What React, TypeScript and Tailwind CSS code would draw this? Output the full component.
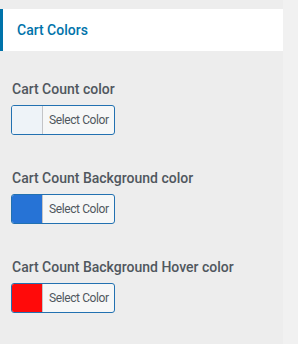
import React from 'react';

interface ColorField {
  label: string;
  color: string;
}

const fields: ColorField[] = [
  { label: 'Cart Count color', color: '#eef3f8' },
  { label: 'Cart Count Background color', color: '#2673d6' },
  { label: 'Cart Count Background Hover color', color: '#ff0a0a' },
];

function ColorPicker({ color }: { color: string }) {
  return (
    <button className="flex h-[30px] w-[104px] items-stretch overflow-hidden rounded-[3px] border border-[#2271b1] bg-[#f6f7f7]">
      <span className="block w-[31px] border-r border-[#c3c4c7]" style={{ backgroundColor: color }} />
      <span className="flex items-center pl-[6px] text-[12px] tracking-[-0.4px] text-[#50575e]">Select Color</span>
    </button>
  );
}

export default function App() {
  return (
    <div className="flex min-h-[344px] font-['Roboto',sans-serif]">
      <div className="w-[283px] bg-[#ededed] pt-[9px]">
        {/* Section header */}
        <div className="flex h-[42px] items-center border-l-[3px] border-[#0073aa] bg-white pl-[14px]">
          <h3 className="text-[14px] font-medium text-[#0073aa]">Cart Colors</h3>
        </div>

        <div className="px-[11px] pt-[28px]">
          {fields.map((f) => (
            <div key={f.label} className="mb-[33px]">
              <p className="mb-[6px] pl-[1px] text-[14px] leading-[20px] font-medium text-[#50575e]">{f.label}</p>
              <ColorPicker color={f.color} />
            </div>
          ))}
        </div>
      </div>
      <div className="flex-1 bg-[#f1f1f1]" />
    </div>
  );
}
